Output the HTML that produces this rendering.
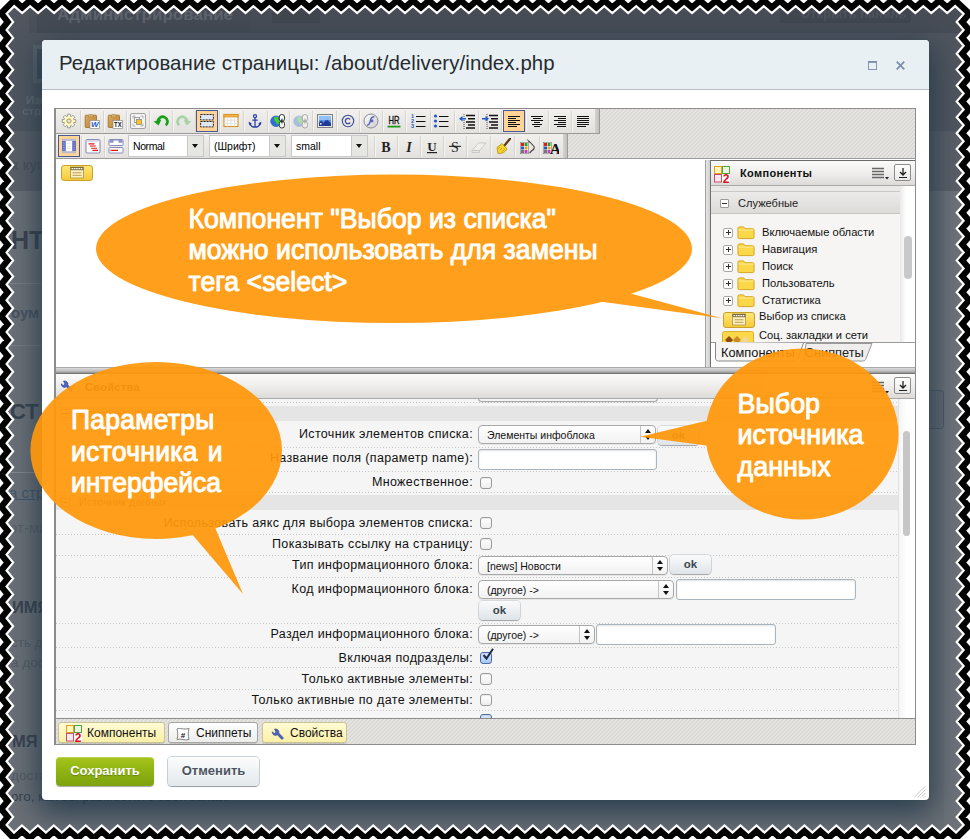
<!DOCTYPE html>
<html><head><meta charset="utf-8">
<style>
*{box-sizing:border-box;margin:0;padding:0}
html,body{width:970px;height:839px;overflow:hidden;background:#fff;font-family:"Liberation Sans",sans-serif;}
#stage{position:relative;width:970px;height:839px;overflow:hidden;background:#fff}
#stage svg.z{position:absolute;left:0;top:0}
#content{position:absolute;left:0;top:0;width:970px;height:839px;overflow:hidden;background:#6c7077;clip-path:polygon(6.6px 13.7px,14.2px 6.1px,22.2px 13.0px,30.1px 6.1px,38.1px 13.0px,46.1px 6.1px,54.1px 13.0px,62.0px 6.1px,70.0px 13.0px,78.0px 6.1px,86.0px 13.0px,93.9px 6.1px,101.9px 13.0px,109.9px 6.1px,117.9px 13.0px,125.8px 6.1px,133.8px 13.0px,141.8px 6.1px,149.8px 13.0px,157.7px 6.1px,165.7px 13.0px,173.7px 6.1px,181.7px 13.0px,189.6px 6.1px,197.6px 13.0px,205.6px 6.1px,213.6px 13.0px,221.5px 6.1px,229.5px 13.0px,237.5px 6.1px,245.5px 13.0px,253.4px 6.1px,261.4px 13.0px,269.4px 6.1px,277.4px 13.0px,285.3px 6.1px,293.3px 13.0px,301.3px 6.1px,309.3px 13.0px,317.2px 6.1px,325.2px 13.0px,333.2px 6.1px,341.2px 13.0px,349.1px 6.1px,357.1px 13.0px,365.1px 6.1px,373.1px 13.0px,381.0px 6.1px,389.0px 13.0px,397.0px 6.1px,405.0px 13.0px,412.9px 6.1px,420.9px 13.0px,428.9px 6.1px,436.9px 13.0px,444.8px 6.1px,452.8px 13.0px,460.8px 6.1px,468.8px 13.0px,476.7px 6.1px,484.7px 13.0px,492.7px 6.1px,500.6px 13.0px,508.6px 6.1px,516.6px 13.0px,524.6px 6.1px,532.5px 13.0px,540.5px 6.1px,548.5px 13.0px,556.5px 6.1px,564.4px 13.0px,572.4px 6.1px,580.4px 13.0px,588.4px 6.1px,596.3px 13.0px,604.3px 6.1px,612.3px 13.0px,620.3px 6.1px,628.2px 13.0px,636.2px 6.1px,644.2px 13.0px,652.2px 6.1px,660.1px 13.0px,668.1px 6.1px,676.1px 13.0px,684.1px 6.1px,692.0px 13.0px,700.0px 6.1px,708.0px 13.0px,716.0px 6.1px,723.9px 13.0px,731.9px 6.1px,739.9px 13.0px,747.9px 6.1px,755.8px 13.0px,763.8px 6.1px,771.8px 13.0px,779.8px 6.1px,787.7px 13.0px,795.7px 6.1px,803.7px 13.0px,811.7px 6.1px,819.6px 13.0px,827.6px 6.1px,835.6px 13.0px,843.6px 6.1px,851.5px 13.0px,859.5px 6.1px,867.5px 13.0px,875.5px 6.1px,883.4px 13.0px,891.4px 6.1px,899.4px 13.0px,907.4px 6.1px,915.3px 13.0px,923.3px 6.1px,931.3px 13.0px,939.3px 6.1px,947.2px 13.0px,955.2px 6.1px,963.6px 13.9px,956.7px 21.9px,963.6px 29.9px,956.7px 37.8px,963.6px 45.8px,956.7px 53.7px,963.6px 61.7px,956.7px 69.6px,963.6px 77.6px,956.7px 85.5px,963.6px 93.5px,956.7px 101.4px,963.6px 109.4px,956.7px 117.3px,963.6px 125.3px,956.7px 133.2px,963.6px 141.2px,956.7px 149.1px,963.6px 157.1px,956.7px 165.0px,963.6px 173.0px,956.7px 180.9px,963.6px 188.9px,956.7px 196.8px,963.6px 204.8px,956.7px 212.7px,963.6px 220.7px,956.7px 228.6px,963.6px 236.6px,956.7px 244.5px,963.6px 252.5px,956.7px 260.4px,963.6px 268.4px,956.7px 276.3px,963.6px 284.3px,956.7px 292.2px,963.6px 300.2px,956.7px 308.1px,963.6px 316.1px,956.7px 324.0px,963.6px 332.0px,956.7px 339.9px,963.6px 347.9px,956.7px 355.8px,963.6px 363.8px,956.7px 371.7px,963.6px 379.7px,956.7px 387.6px,963.6px 395.6px,956.7px 403.5px,963.6px 411.5px,956.7px 419.4px,963.6px 427.4px,956.7px 435.4px,963.6px 443.3px,956.7px 451.3px,963.6px 459.2px,956.7px 467.2px,963.6px 475.1px,956.7px 483.1px,963.6px 491.0px,956.7px 499.0px,963.6px 506.9px,956.7px 514.9px,963.6px 522.8px,956.7px 530.8px,963.6px 538.7px,956.7px 546.7px,963.6px 554.6px,956.7px 562.6px,963.6px 570.5px,956.7px 578.5px,963.6px 586.4px,956.7px 594.4px,963.6px 602.3px,956.7px 610.3px,963.6px 618.2px,956.7px 626.2px,963.6px 634.1px,956.7px 642.1px,963.6px 650.0px,956.7px 658.0px,963.6px 665.9px,956.7px 673.9px,963.6px 681.8px,956.7px 689.8px,963.6px 697.7px,956.7px 705.7px,963.6px 713.6px,956.7px 721.6px,963.6px 729.5px,956.7px 737.5px,963.6px 745.4px,956.7px 753.4px,963.6px 761.3px,956.7px 769.3px,963.6px 777.2px,956.7px 785.2px,963.6px 793.1px,956.7px 801.1px,963.6px 809.0px,956.7px 817.0px,963.6px 825.0px,956.0px 832.6px,948.1px 825.4px,940.1px 832.6px,932.1px 825.4px,924.1px 832.6px,916.2px 825.4px,908.2px 832.6px,900.2px 825.4px,892.2px 832.6px,884.2px 825.4px,876.2px 832.6px,868.3px 825.4px,860.3px 832.6px,852.3px 825.4px,844.3px 832.6px,836.3px 825.4px,828.3px 832.6px,820.3px 825.4px,812.4px 832.6px,804.4px 825.4px,796.4px 832.6px,788.4px 825.4px,780.4px 832.6px,772.4px 825.4px,764.5px 832.6px,756.5px 825.4px,748.5px 832.6px,740.5px 825.4px,732.5px 832.6px,724.5px 825.4px,716.5px 832.6px,708.6px 825.4px,700.6px 832.6px,692.6px 825.4px,684.6px 832.6px,676.6px 825.4px,668.6px 832.6px,660.7px 825.4px,652.7px 832.6px,644.7px 825.4px,636.7px 832.6px,628.7px 825.4px,620.7px 832.6px,612.8px 825.4px,604.8px 832.6px,596.8px 825.4px,588.8px 832.6px,580.8px 825.4px,572.8px 832.6px,564.8px 825.4px,556.9px 832.6px,548.9px 825.4px,540.9px 832.6px,532.9px 825.4px,524.9px 832.6px,516.9px 825.4px,509.0px 832.6px,501.0px 825.4px,493.0px 832.6px,485.0px 825.4px,477.0px 832.6px,469.0px 825.4px,461.0px 832.6px,453.1px 825.4px,445.1px 832.6px,437.1px 825.4px,429.1px 832.6px,421.1px 825.4px,413.1px 832.6px,405.2px 825.4px,397.2px 832.6px,389.2px 825.4px,381.2px 832.6px,373.2px 825.4px,365.2px 832.6px,357.2px 825.4px,349.3px 832.6px,341.3px 825.4px,333.3px 832.6px,325.3px 825.4px,317.3px 832.6px,309.3px 825.4px,301.4px 832.6px,293.4px 825.4px,285.4px 832.6px,277.4px 825.4px,269.4px 832.6px,261.4px 825.4px,253.5px 832.6px,245.5px 825.4px,237.5px 832.6px,229.5px 825.4px,221.5px 832.6px,213.5px 825.4px,205.5px 832.6px,197.6px 825.4px,189.6px 832.6px,181.6px 825.4px,173.6px 832.6px,165.6px 825.4px,157.6px 832.6px,149.7px 825.4px,141.7px 832.6px,133.7px 825.4px,125.7px 832.6px,117.7px 825.4px,109.7px 832.6px,101.7px 825.4px,93.8px 832.6px,85.8px 825.4px,77.8px 832.6px,69.8px 825.4px,61.8px 832.6px,53.8px 825.4px,45.9px 832.6px,37.9px 825.4px,29.9px 832.6px,21.9px 825.4px,14.0px 832.6px,6.6px 824.9px,13.1px 817.0px,6.6px 809.0px,13.1px 801.1px,6.6px 793.1px,13.1px 785.2px,6.6px 777.2px,13.1px 769.3px,6.6px 761.3px,13.1px 753.4px,6.6px 745.4px,13.1px 737.5px,6.6px 729.5px,13.1px 721.6px,6.6px 713.6px,13.1px 705.7px,6.6px 697.7px,13.1px 689.8px,6.6px 681.8px,13.1px 673.9px,6.6px 665.9px,13.1px 658.0px,6.6px 650.0px,13.1px 642.1px,6.6px 634.1px,13.1px 626.2px,6.6px 618.2px,13.1px 610.3px,6.6px 602.3px,13.1px 594.4px,6.6px 586.4px,13.1px 578.5px,6.6px 570.5px,13.1px 562.6px,6.6px 554.6px,13.1px 546.7px,6.6px 538.7px,13.1px 530.8px,6.6px 522.8px,13.1px 514.9px,6.6px 506.9px,13.1px 499.0px,6.6px 491.0px,13.1px 483.1px,6.6px 475.1px,13.1px 467.2px,6.6px 459.2px,13.1px 451.3px,6.6px 443.3px,13.1px 435.4px,6.6px 427.4px,13.1px 419.5px,6.6px 411.6px,13.1px 403.6px,6.6px 395.7px,13.1px 387.7px,6.6px 379.8px,13.1px 371.8px,6.6px 363.9px,13.1px 355.9px,6.6px 348.0px,13.1px 340.0px,6.6px 332.1px,13.1px 324.1px,6.6px 316.2px,13.1px 308.2px,6.6px 300.3px,13.1px 292.3px,6.6px 284.4px,13.1px 276.4px,6.6px 268.5px,13.1px 260.5px,6.6px 252.6px,13.1px 244.6px,6.6px 236.7px,13.1px 228.7px,6.6px 220.8px,13.1px 212.8px,6.6px 204.9px,13.1px 196.9px,6.6px 189.0px,13.1px 181.0px,6.6px 173.1px,13.1px 165.1px,6.6px 157.2px,13.1px 149.2px,6.6px 141.3px,13.1px 133.3px,6.6px 125.4px,13.1px 117.4px,6.6px 109.5px,13.1px 101.5px,6.6px 93.6px,13.1px 85.6px,6.6px 77.7px,13.1px 69.7px,6.6px 61.8px,13.1px 53.8px,6.6px 45.9px,13.1px 37.9px,6.6px 30.0px,13.1px 22.0px)}
.abs{position:absolute}
i{font-style:normal}
#adm{left:0;top:0;width:970px;height:131px;background:#51565f}
#band{left:0;top:131px;width:970px;height:60px;background:#5b5f68}
.bgt{position:absolute;color:#4b525c;white-space:nowrap;font-size:15px}
.bgh{position:absolute;color:#39424e;font-weight:bold;font-size:25px;white-space:nowrap}
#dlg{left:42px;top:40px;width:887px;height:760px;background:#fff;border-radius:4px;box-shadow:0 9px 30px 5px rgba(30,54,70,.85)}
#ttl{left:0;top:0;width:887px;height:50px;background:#e9f0f3;border-bottom:1px solid #b9bfc2;border-radius:4px 4px 0 0}
#ttl span{position:absolute;left:17px;top:11.5px;font-size:20.4px;letter-spacing:.11px;color:#262b30;white-space:nowrap}
.hatch{background:repeating-linear-gradient(135deg,#e6e4e0 0,#e6e4e0 1.6px,#dbd9d5 1.6px,#dbd9d5 2.83px)}
#ed{left:12px;top:68px;width:862px;height:637px;border:1px solid #8c8c8c;border-left-width:2px;background:#fff}
#tbar{left:0;top:0;width:859px;height:50px;border-bottom:1px solid #9b9b9b}
.tg{position:absolute;height:25px;background:linear-gradient(#f1f0ed,#e2e1dd);border-right:1px solid #9b9b9b;border-bottom:1px solid #9b9b9b}
.tg:after{content:"";position:absolute;right:0;top:0;bottom:0;width:4px;background:linear-gradient(90deg,#d4d3cf,#c2c1bd)}
.sep{position:absolute;width:2px;height:21px;background:linear-gradient(90deg,#d6d5d1 50%,#f6f5f3 50%)}
.hl{width:22px;height:22px;background:#ffd497;border:1px solid #4d5892}
.tsel{height:22px;background:#fff;border:1px solid #c8c8c8;font-size:10.5px;color:#000}
.tsel span{position:absolute;left:4px;top:4px}
.tsel b{position:absolute;right:0;top:0;width:16px;height:20px;background:#e6e6e3;border-left:1px solid #c8c8c8}
.tsel b:after{content:"";position:absolute;left:4px;top:8px;border:3.5px solid transparent;border-top:4px solid #111;border-bottom:0}

#bsave{left:14px;top:717px;width:98px;height:29px;border-radius:4px;background:linear-gradient(#a6c51c,#8fb312 50%,#7da20d);box-shadow:0 1px 1px rgba(0,0,0,.35),inset 0 1px 0 rgba(255,255,255,.25);color:#fff;font-weight:bold;font-size:13px;text-align:center;line-height:28px;text-shadow:0 1px 1px rgba(0,0,0,.25)}
#bcanc{left:126px;top:717px;width:91px;height:29px;border-radius:4px;background:linear-gradient(#fcfdfd,#e2e8eb);box-shadow:0 1px 1px rgba(0,0,0,.25),0 0 0 1px rgba(190,200,206,.8);color:#4b5560;font-weight:bold;font-size:13px;text-align:center;line-height:28px;text-shadow:0 1px 0 #fff}
.bub{}

#vsep{width:6px;height:207px;background:linear-gradient(90deg,#a2a2a2 0,#a2a2a2 1px,#e4e4e4 1px,#cfcfcf 5px,#6f6f6f 5px)}
#rp{width:204px;height:207px;background:#fff}
.phdr{background:linear-gradient(#fbfbfa,#ecebe9 60%,#dcdbd8);border-bottom:1px solid #a9a9a7}
.phdr b{position:absolute;font-size:11px;letter-spacing:.33px;color:#111;white-space:nowrap}
.shdr{background:linear-gradient(#ecebe9,#dcdbd8);border-bottom:1px solid #c6c5c2}
.shdr span{position:absolute;font-size:11.1px;color:#222}
.pm{width:9px;height:9px;border:1px solid #9a9a9a;background:#fff;border-radius:1px}
.pm .h{position:absolute;left:1px;top:3px;width:5px;height:1px;background:#333}
.pm .v{position:absolute;left:3px;top:1px;width:1px;height:5px;background:#333}
.pm.pl{width:10px;height:10px;border-color:#a8a8a8;border-radius:2px}
.pm.pl .h{left:1.5px;top:3.5px}
.pm.pl .v{left:3.5px;top:1.5px}
.ti{font-size:11.2px;color:#111;white-space:nowrap}
.dlb{width:17px;height:17px;border:1px solid #8c8c8c;background:linear-gradient(#fff,#e9e9e7);border-radius:2px}
.dlb svg{position:absolute;left:0.5px;top:0.5px}
#pb{background:#f5f5f5;overflow:hidden;font-size:12.500px;color:#111}
#pb .dot{position:absolute;left:0;width:842px;height:1px;background:repeating-linear-gradient(90deg,#c9c9c9 0,#c9c9c9 1px,transparent 1px,transparent 3px)}
#pb .lab{position:absolute;right:425px;white-space:nowrap;letter-spacing:.36px}
#pb .cb{position:absolute;left:424px;width:12px;height:12px;border:1px solid #9a9a9a;border-radius:3px;background:linear-gradient(#fff,#eee);box-shadow:inset 0 1px 1px rgba(0,0,0,.08)}
#pb .cb.ch{border-color:#4a6aa8;background:linear-gradient(#dfeafc,#a9c6f2)}
.psel{position:absolute;height:19px;border:1px solid #a8a8a8;border-radius:4px;background:linear-gradient(#fff,#f2f2f2);font-size:10.500px;box-shadow:0 1px 0 rgba(0,0,0,.06)}
.psel span{position:absolute;left:8px;top:3px;white-space:nowrap}
.psel b{position:absolute;right:0;top:0;width:15px;height:17px;border-left:1px solid #c4c4c4}
.psel .u{position:absolute;left:4px;top:3px;border:3px solid transparent;border-bottom:4.500px solid #111;border-top:0}
.psel .d{position:absolute;left:4px;top:10px;border:3px solid transparent;border-top:4.500px solid #111;border-bottom:0}
.pinp{position:absolute;height:21px;border:1px solid #a9b4bd;border-radius:3px;background:#fff;box-shadow:inset 0 1px 2px rgba(0,0,0,.12)}
.okb{position:absolute;width:41px;height:19px;border-radius:4px;background:linear-gradient(#fafbfc,#dfe4e8);box-shadow:0 1px 1px rgba(0,0,0,.25),0 0 0 1px rgba(160,170,178,.35);font-size:11.500px;font-weight:bold;color:#3a4850;text-align:center;line-height:18px}
.ghdr{position:absolute;left:0;width:842px;height:15px;background:#e5e5e5}
.ghdr span{position:absolute;left:23px;top:1px;font-size:11px;color:#555}
.btab{position:absolute;top:3px;height:21px;border:1px solid #a6a6a6;border-radius:3px;background:linear-gradient(#fff,#ececea);box-shadow:0 1px 0 rgba(0,0,0,.12)}
.btab.y{background:linear-gradient(#fffbd4,#fbf0a8);border-color:#c9c295}
.btab span{position:absolute;top:3px;font-size:12px;color:#111;white-space:nowrap}
</style></head><body>
<div id="stage">
<svg class="z" width="970" height="839"><polygon points="6.6,13.7 14.2,6.1 22.2,13.0 30.1,6.1 38.1,13.0 46.1,6.1 54.1,13.0 62.0,6.1 70.0,13.0 78.0,6.1 86.0,13.0 93.9,6.1 101.9,13.0 109.9,6.1 117.9,13.0 125.8,6.1 133.8,13.0 141.8,6.1 149.8,13.0 157.7,6.1 165.7,13.0 173.7,6.1 181.7,13.0 189.6,6.1 197.6,13.0 205.6,6.1 213.6,13.0 221.5,6.1 229.5,13.0 237.5,6.1 245.5,13.0 253.4,6.1 261.4,13.0 269.4,6.1 277.4,13.0 285.3,6.1 293.3,13.0 301.3,6.1 309.3,13.0 317.2,6.1 325.2,13.0 333.2,6.1 341.2,13.0 349.1,6.1 357.1,13.0 365.1,6.1 373.1,13.0 381.0,6.1 389.0,13.0 397.0,6.1 405.0,13.0 412.9,6.1 420.9,13.0 428.9,6.1 436.9,13.0 444.8,6.1 452.8,13.0 460.8,6.1 468.8,13.0 476.7,6.1 484.7,13.0 492.7,6.1 500.6,13.0 508.6,6.1 516.6,13.0 524.6,6.1 532.5,13.0 540.5,6.1 548.5,13.0 556.5,6.1 564.4,13.0 572.4,6.1 580.4,13.0 588.4,6.1 596.3,13.0 604.3,6.1 612.3,13.0 620.3,6.1 628.2,13.0 636.2,6.1 644.2,13.0 652.2,6.1 660.1,13.0 668.1,6.1 676.1,13.0 684.1,6.1 692.0,13.0 700.0,6.1 708.0,13.0 716.0,6.1 723.9,13.0 731.9,6.1 739.9,13.0 747.9,6.1 755.8,13.0 763.8,6.1 771.8,13.0 779.8,6.1 787.7,13.0 795.7,6.1 803.7,13.0 811.7,6.1 819.6,13.0 827.6,6.1 835.6,13.0 843.6,6.1 851.5,13.0 859.5,6.1 867.5,13.0 875.5,6.1 883.4,13.0 891.4,6.1 899.4,13.0 907.4,6.1 915.3,13.0 923.3,6.1 931.3,13.0 939.3,6.1 947.2,13.0 955.2,6.1 963.6,13.9 956.7,21.9 963.6,29.9 956.7,37.8 963.6,45.8 956.7,53.7 963.6,61.7 956.7,69.6 963.6,77.6 956.7,85.5 963.6,93.5 956.7,101.4 963.6,109.4 956.7,117.3 963.6,125.3 956.7,133.2 963.6,141.2 956.7,149.1 963.6,157.1 956.7,165.0 963.6,173.0 956.7,180.9 963.6,188.9 956.7,196.8 963.6,204.8 956.7,212.7 963.6,220.7 956.7,228.6 963.6,236.6 956.7,244.5 963.6,252.5 956.7,260.4 963.6,268.4 956.7,276.3 963.6,284.3 956.7,292.2 963.6,300.2 956.7,308.1 963.6,316.1 956.7,324.0 963.6,332.0 956.7,339.9 963.6,347.9 956.7,355.8 963.6,363.8 956.7,371.7 963.6,379.7 956.7,387.6 963.6,395.6 956.7,403.5 963.6,411.5 956.7,419.4 963.6,427.4 956.7,435.4 963.6,443.3 956.7,451.3 963.6,459.2 956.7,467.2 963.6,475.1 956.7,483.1 963.6,491.0 956.7,499.0 963.6,506.9 956.7,514.9 963.6,522.8 956.7,530.8 963.6,538.7 956.7,546.7 963.6,554.6 956.7,562.6 963.6,570.5 956.7,578.5 963.6,586.4 956.7,594.4 963.6,602.3 956.7,610.3 963.6,618.2 956.7,626.2 963.6,634.1 956.7,642.1 963.6,650.0 956.7,658.0 963.6,665.9 956.7,673.9 963.6,681.8 956.7,689.8 963.6,697.7 956.7,705.7 963.6,713.6 956.7,721.6 963.6,729.5 956.7,737.5 963.6,745.4 956.7,753.4 963.6,761.3 956.7,769.3 963.6,777.2 956.7,785.2 963.6,793.1 956.7,801.1 963.6,809.0 956.7,817.0 963.6,825.0 956.0,832.6 948.1,825.4 940.1,832.6 932.1,825.4 924.1,832.6 916.2,825.4 908.2,832.6 900.2,825.4 892.2,832.6 884.2,825.4 876.2,832.6 868.3,825.4 860.3,832.6 852.3,825.4 844.3,832.6 836.3,825.4 828.3,832.6 820.3,825.4 812.4,832.6 804.4,825.4 796.4,832.6 788.4,825.4 780.4,832.6 772.4,825.4 764.5,832.6 756.5,825.4 748.5,832.6 740.5,825.4 732.5,832.6 724.5,825.4 716.5,832.6 708.6,825.4 700.6,832.6 692.6,825.4 684.6,832.6 676.6,825.4 668.6,832.6 660.7,825.4 652.7,832.6 644.7,825.4 636.7,832.6 628.7,825.4 620.7,832.6 612.8,825.4 604.8,832.6 596.8,825.4 588.8,832.6 580.8,825.4 572.8,832.6 564.8,825.4 556.9,832.6 548.9,825.4 540.9,832.6 532.9,825.4 524.9,832.6 516.9,825.4 509.0,832.6 501.0,825.4 493.0,832.6 485.0,825.4 477.0,832.6 469.0,825.4 461.0,832.6 453.1,825.4 445.1,832.6 437.1,825.4 429.1,832.6 421.1,825.4 413.1,832.6 405.2,825.4 397.2,832.6 389.2,825.4 381.2,832.6 373.2,825.4 365.2,832.6 357.2,825.4 349.3,832.6 341.3,825.4 333.3,832.6 325.3,825.4 317.3,832.6 309.3,825.4 301.4,832.6 293.4,825.4 285.4,832.6 277.4,825.4 269.4,832.6 261.4,825.4 253.5,832.6 245.5,825.4 237.5,832.6 229.5,825.4 221.5,832.6 213.5,825.4 205.5,832.6 197.6,825.4 189.6,832.6 181.6,825.4 173.6,832.6 165.6,825.4 157.6,832.6 149.7,825.4 141.7,832.6 133.7,825.4 125.7,832.6 117.7,825.4 109.7,832.6 101.7,825.4 93.8,832.6 85.8,825.4 77.8,832.6 69.8,825.4 61.8,832.6 53.8,825.4 45.9,832.6 37.9,825.4 29.9,832.6 21.9,825.4 14.0,832.6 6.6,824.9 13.1,817.0 6.6,809.0 13.1,801.1 6.6,793.1 13.1,785.2 6.6,777.2 13.1,769.3 6.6,761.3 13.1,753.4 6.6,745.4 13.1,737.5 6.6,729.5 13.1,721.6 6.6,713.6 13.1,705.7 6.6,697.7 13.1,689.8 6.6,681.8 13.1,673.9 6.6,665.9 13.1,658.0 6.6,650.0 13.1,642.1 6.6,634.1 13.1,626.2 6.6,618.2 13.1,610.3 6.6,602.3 13.1,594.4 6.6,586.4 13.1,578.5 6.6,570.5 13.1,562.6 6.6,554.6 13.1,546.7 6.6,538.7 13.1,530.8 6.6,522.8 13.1,514.9 6.6,506.9 13.1,499.0 6.6,491.0 13.1,483.1 6.6,475.1 13.1,467.2 6.6,459.2 13.1,451.3 6.6,443.3 13.1,435.4 6.6,427.4 13.1,419.5 6.6,411.6 13.1,403.6 6.6,395.7 13.1,387.7 6.6,379.8 13.1,371.8 6.6,363.9 13.1,355.9 6.6,348.0 13.1,340.0 6.6,332.1 13.1,324.1 6.6,316.2 13.1,308.2 6.6,300.3 13.1,292.3 6.6,284.4 13.1,276.4 6.6,268.5 13.1,260.5 6.6,252.6 13.1,244.6 6.6,236.7 13.1,228.7 6.6,220.8 13.1,212.8 6.6,204.9 13.1,196.9 6.6,189.0 13.1,181.0 6.6,173.1 13.1,165.1 6.6,157.2 13.1,149.2 6.6,141.3 13.1,133.3 6.6,125.4 13.1,117.4 6.6,109.5 13.1,101.5 6.6,93.6 13.1,85.6 6.6,77.7 13.1,69.7 6.6,61.8 13.1,53.8 6.6,45.9 13.1,37.9 6.6,30.0 13.1,22.0" fill="#000" stroke="#000" stroke-width="14.6" stroke-linejoin="miter"/></svg>
<div id="content">
  <div class="abs" id="adm"></div>
  <div class="abs" id="band"></div>
  
<div class="abs" style="left:29px;top:0;width:950px;height:33px;background:#484d56"></div>
<div class="abs" style="left:29px;top:0;width:8px;height:33px;background:#4c515a"></div>
<div class="abs" style="left:37px;top:0;width:214px;height:33px;background:#464b54"></div>
<div class="abs" style="left:272px;top:0;width:48px;height:23px;background:#42474f;border-radius:3px"></div>
<div class="abs" style="left:780px;top:0;width:131px;height:23px;background:#42474f;border-radius:3px"></div>
<div class="bgt" style="left:57px;top:5px;font-size:17px;font-weight:bold;color:#5f646d">Администрирование</div>
<div class="bgt" style="left:800px;top:6px;font-size:13px;font-weight:bold;color:#4e535c">Открыть панель</div>
<div class="abs" style="left:33px;top:45px;width:40px;height:38px;border:4px solid #5d646d;background:#454e59"></div>
<div class="bgt" style="left:26px;top:94px;font-size:11.500px;font-weight:bold;color:#676c75">Изм</div>
<div class="bgt" style="left:22px;top:105px;font-size:11.500px;font-weight:bold;color:#676c75">стр</div>
<div class="abs" style="left:944px;top:191px;width:30px;height:660px;background:#6f737a"></div>
<div class="abs" style="left:0;top:283px;width:60px;height:1px;background:#7b7f86"></div>
<div class="abs" style="left:0;top:345px;width:60px;height:1px;background:#7b7f86"></div>
<div class="bgt" style="left:12px;top:156px;color:#484e57">к куп</div>
<div class="bgh" style="left:11px;top:226px;font-size:25px">НТ</div>
<div class="bgt" style="left:11px;top:304px;font-weight:bold;color:#4a5260">оум</div>
<div class="bgh" style="left:10px;top:399px;font-size:22px">СТ</div>
<div class="abs" style="left:0;top:472px;width:60px;height:1px;background:#858990"></div>
<div class="bgt" style="left:9px;top:484px;text-decoration:underline;color:#41586c">а стра</div>
<div class="bgt" style="left:9px;top:519px;color:#596069">от-ма</div>
<div class="bgh" style="left:12px;top:598px;font-size:16.5px">ИМЯ</div>
<div class="bgt" style="left:11px;top:635px;font-size:13.5px;color:#565c65">сть д</div>
<div class="bgt" style="left:11px;top:655px;font-size:13.5px;color:#565c65">а дост</div>
<div class="bgh" style="left:12px;top:732px;font-size:16.5px">МЯ</div>
<div class="bgt" style="left:11px;top:768px;font-size:13.5px;color:#565c65">доста</div>
<div class="bgt" style="left:11px;top:789px;font-size:13.5px;color:#36424f">ого, как вы разместите свой заказ.</div>
<div class="abs" style="left:890px;top:390px;width:54px;height:39px;border:1px solid rgba(48,68,88,.45);border-radius:4px;background:rgba(60,80,100,.10)"></div>

  <div class="abs" id="dlg"><div class="abs" style="left:0;top:0;width:887px;height:760px">
    <div class="abs" id="ttl"><span>Редактирование страницы: /about/delivery/index.php</span></div>
    <div class="abs" id="ed">
      <div class="abs hatch" id="tbar">
        <div class="tg" style="left:0;top:0;width:544px"></div>
        <div class="tg" style="left:0;top:25px;width:512px"></div>
        <i class="sep" style="left:24px;top:2px"></i><i class="sep" style="left:47px;top:2px"></i><i class="sep" style="left:70px;top:2px"></i><i class="sep" style="left:93px;top:2px"></i><i class="sep" style="left:116px;top:2px"></i><i class="sep" style="left:139px;top:2px"></i><i class="sep" style="left:163px;top:2px"></i><i class="sep" style="left:187px;top:2px"></i><i class="sep" style="left:211px;top:2px"></i><i class="sep" style="left:233px;top:2px"></i><i class="sep" style="left:256px;top:2px"></i><i class="sep" style="left:280px;top:2px"></i><i class="sep" style="left:303px;top:2px"></i><i class="sep" style="left:326px;top:2px"></i><i class="sep" style="left:349px;top:2px"></i><i class="sep" style="left:374px;top:2px"></i><i class="sep" style="left:398px;top:2px"></i><i class="sep" style="left:422px;top:2px"></i><i class="sep" style="left:445px;top:2px"></i><i class="sep" style="left:469px;top:2px"></i><i class="sep" style="left:492px;top:2px"></i><i class="sep" style="left:515px;top:2px"></i><i class="sep" style="left:25px;top:27px"></i><i class="sep" style="left:48px;top:27px"></i><i class="sep" style="left:318px;top:27px"></i><i class="sep" style="left:341px;top:27px"></i><i class="sep" style="left:364px;top:27px"></i><i class="sep" style="left:387px;top:27px"></i><i class="sep" style="left:410px;top:27px"></i><i class="sep" style="left:434px;top:27px"></i><i class="sep" style="left:458px;top:27px"></i><i class="sep" style="left:483px;top:27px"></i>
        <svg class="abs" style="left:5.0px;top:4.0px" width="16" height="16" viewBox="0 0 16 16"><polygon points="6.5,3.2 6.6,1.2 9.4,1.2 9.5,3.2 10.3,3.5 11.8,2.2 13.8,4.2 12.5,5.7 12.8,6.5 14.8,6.6 14.8,9.4 12.8,9.5 12.5,10.3 13.8,11.8 11.8,13.8 10.3,12.5 9.5,12.8 9.4,14.8 6.6,14.8 6.5,12.8 5.7,12.5 4.2,13.8 2.2,11.8 3.5,10.3 3.2,9.5 1.2,9.4 1.2,6.6 3.2,6.5 3.5,5.7 2.2,4.2 4.2,2.2 5.7,3.5" fill="#fbf7c6" stroke="#9a9a9a" stroke-width="1" stroke-linejoin="round"/><circle cx="8" cy="8" r="2.1" fill="#e4e6ee" stroke="#b3953c" stroke-width="1"/></svg><svg class="abs" style="left:27.5px;top:4.0px" width="16" height="16" viewBox="0 0 16 16"><defs><linearGradient id="cb" x1="0" y1="0" x2="1" y2="1"><stop offset="0" stop-color="#d9ab62"/><stop offset="1" stop-color="#b98236"/></linearGradient></defs><rect x="1.200" y="2.200" width="11.300" height="12.300" rx=".9" fill="url(#cb)" stroke="#a3742c" stroke-width=".9"/><path d="M4.300 3.800L5.300 1.600h3.100l1 2.200z" fill="#ecd3a0" stroke="#a3742c" stroke-width=".6"/><path d="M6.100 2.900l.75-.9.750.9z" fill="#a3742c"/><rect x="6" y="7.5" width="9.5" height="8" fill="#fff" stroke="#8a8a8a" stroke-width=".7"/><text x="10.7" y="14.4" font-size="8" font-weight="bold" font-style="italic" fill="#2358c9" text-anchor="middle" font-family="Liberation Sans">W</text></svg><svg class="abs" style="left:50.5px;top:4.0px" width="16" height="16" viewBox="0 0 16 16"><defs><linearGradient id="cb" x1="0" y1="0" x2="1" y2="1"><stop offset="0" stop-color="#d9ab62"/><stop offset="1" stop-color="#b98236"/></linearGradient></defs><rect x="1.200" y="2.200" width="11.300" height="12.300" rx=".9" fill="url(#cb)" stroke="#a3742c" stroke-width=".9"/><path d="M4.300 3.800L5.300 1.600h3.100l1 2.200z" fill="#ecd3a0" stroke="#a3742c" stroke-width=".6"/><path d="M6.100 2.900l.75-.9.750.9z" fill="#a3742c"/><rect x="6" y="7.5" width="9.5" height="8" fill="#fff" stroke="#8a8a8a" stroke-width=".7"/><text x="10.8" y="14.3" font-size="7" font-weight="bold" fill="#111" text-anchor="middle" font-family="Liberation Sans" textLength="7.5" lengthAdjust="spacingAndGlyphs">TX</text></svg><svg class="abs" style="left:73.5px;top:4.0px" width="16" height="16" viewBox="0 0 16 16"><rect x=".5" y=".5" width="15" height="15" rx="1.5" fill="#f4f4f2" stroke="#9a9a9a" stroke-width=".9"/><path d="M3 5.5V3h2.5M10.5 3H13v2.5M13 10.5V13h-2.5M5.5 13H3v-2.5" fill="none" stroke="#aaa" stroke-width=".9"/><rect x="4.5" y="4.5" width="5" height="5" fill="#f4f4f2" stroke="#8d8d8d" stroke-width=".8"/><rect x="6.5" y="6.5" width="5" height="5" fill="#ffc21a" stroke="#8d8d8d" stroke-width=".8"/></svg><svg class="abs" style="left:97.0px;top:4.0px" width="16" height="16" viewBox="0 0 16 16"><path d="M12.8 12.2A4.8 4.8 0 1 0 4.9 8.6" fill="none" stroke="#16a016" stroke-width="2.7"/><path d="M.6 8.4L8.4 6.6 5.6 12.6z" fill="#16a016"/></svg><svg class="abs" style="left:120.0px;top:4.0px" width="16" height="16" viewBox="0 0 16 16"><g opacity=".3" transform="translate(16 0) scale(-1 1)"><path d="M12.8 12.2A4.8 4.8 0 1 0 4.9 8.6" fill="none" stroke="#16a016" stroke-width="2.7"/><path d="M.6 8.4L8.4 6.6 5.6 12.6z" fill="#16a016"/></g></svg><div class="abs hl" style="left:140px;top:1px"></div><svg class="abs" style="left:143.0px;top:4.0px" width="16" height="16" viewBox="0 0 16 16"><rect x="1.6" y="1.5" width="12.8" height="5.4" fill="#dfe6f5" stroke="#222" stroke-width="1" stroke-dasharray="2 1"/><rect x="1.600" y="8.500" width="12.800" height="5.400" fill="#dfe6f5" stroke="#222" stroke-width="1" stroke-dasharray="2 1"/></svg><svg class="abs" style="left:167.0px;top:4.0px" width="16" height="16" viewBox="0 0 16 16"><rect x="1" y="1.500" width="14" height="12" fill="#fff" stroke="#d8901c" stroke-width="1.100"/><rect x="1" y="1.500" width="14" height="2.500" fill="#f4b44c" stroke="#d8901c" stroke-width=".8"/><path d="M4.500 4v9.500M8 4v9.500M11.500 4v9.500M1 7.200h14M1 10.300h14" stroke="#dcdcdc" stroke-width=".8" fill="none"/></svg><svg class="abs" style="left:191.0px;top:4.0px" width="16" height="16" viewBox="0 0 16 16"><g fill="none" stroke="#2c3ea6" stroke-width="1.250"><circle cx="8" cy="3.200" r="1.500"/><path d="M8 4.700V14.300M5.300 7.200h5.400M2.800 10.200c.8 2.600 2.700 4 5.200 4s4.400-1.400 5.200-4"/></g><path d="M1.600 8.800L4.800 10.200 2.200 12.200zM14.400 8.800L11.200 10.200 13.800 12.200z" fill="#2c3ea6"/></svg><svg class="abs" style="left:214.0px;top:4.0px" width="16" height="16" viewBox="0 0 16 16"><circle cx="6" cy="8.200" r="5.300" fill="#2f6fd6" stroke="#2456b0" stroke-width=".6"/><path d="M4.200 4.300c1.800-.8 3.600-.3 4.600.9l-1.200.9 1.900 1.700c.8.200 1.500.200 2 .500l-1.800.800-1.200 2.200-1.600.200-.600-2.300-1.800-1.300z" fill="#3fcf2f"/><g fill="#fff" stroke="#333" stroke-width="1"><rect x="9.300" y="1.500" width="5.200" height="6.800" rx="2.500"/><rect x="9.300" y="8.200" width="5.200" height="6.800" rx="2.500"/></g><path d="M11.900 5v6.500" stroke="#222" stroke-width="1.300"/><path d="M11.900 4.200v2M11.900 10v2" stroke="#fff" stroke-width="1.300"/></svg><svg class="abs" style="left:237.0px;top:4.0px" width="16" height="16" viewBox="0 0 16 16"><g opacity=".35"><circle cx="6" cy="8.200" r="5.300" fill="#2f6fd6" stroke="#2456b0" stroke-width=".6"/><path d="M4.200 4.300c1.800-.8 3.600-.3 4.600.9l-1.200.9 1.900 1.700c.8.200 1.500.200 2 .500l-1.800.800-1.200 2.200-1.600.200-.600-2.300-1.800-1.300z" fill="#3fcf2f"/><g fill="#fff" stroke="#333" stroke-width="1"><rect x="9.300" y="1.500" width="5.200" height="6.800" rx="2.500"/><rect x="9.300" y="8.200" width="5.200" height="6.800" rx="2.500"/></g><path d="M11.900 5v6.500" stroke="#222" stroke-width="1.300"/><path d="M11.900 4.200v2M11.900 10v2" stroke="#fff" stroke-width="1.300"/></g></svg><svg class="abs" style="left:260.5px;top:4.0px" width="16" height="16" viewBox="0 0 16 16"><rect x=".5" y="1.500" width="15" height="13" fill="#e9e9e9" stroke="#808080" stroke-width="1"/><rect x="2" y="3" width="12" height="10" fill="#5b9bea"/><rect x="2" y="3" width="12" height="4" fill="#8fc0f6"/><path d="M2 13V9.500l2.500-2 2 2.500 3-4.500 4.500 5V13z" fill="#23399a"/><path d="M8.500 7.200l1-1.500 1.200 1.300-1 .3z" fill="#dfe8ff"/><circle cx="3.800" cy="10.800" r=".9" fill="#fff"/></svg><svg class="abs" style="left:284.0px;top:4.0px" width="16" height="16" viewBox="0 0 16 16"><circle cx="8" cy="8" r="5.700" fill="none" stroke="#3a4796" stroke-width="1.100"/><path d="M10.200 6.400A2.700 2.700 0 1 0 10.200 9.600" fill="none" stroke="#3a4796" stroke-width="1.200"/></svg><svg class="abs" style="left:307.0px;top:4.0px" width="16" height="16" viewBox="0 0 16 16"><defs><linearGradient id="fg" x1="0" y1="0" x2="1" y2="1"><stop offset="0" stop-color="#fff"/><stop offset="1" stop-color="#c9cad2"/></linearGradient></defs><circle cx="8" cy="8" r="7" fill="url(#fg)" stroke="#8b8b90" stroke-width="1"/><path d="M11.300 3.800c-2.600 0-3.400 1.400-3.900 3.500h2.200v1.300H7.100C6.500 10.800 5.800 12 4 12.400" fill="none" stroke="#5a66b4" stroke-width="1.400"/></svg><svg class="abs" style="left:329.5px;top:4.0px" width="16" height="16" viewBox="0 0 16 16"><text x="8" y="10.500" font-size="11" fill="#111" stroke="#111" stroke-width=".35" text-anchor="middle" font-family="Liberation Sans" textLength="11" lengthAdjust="spacingAndGlyphs">HR</text><rect x="1.500" y="12.700" width="13" height="1.800" fill="#1e9a1e"/></svg><svg class="abs" style="left:354.0px;top:4.0px" width="16" height="16" viewBox="0 0 16 16"><path d="M6 3.500h9.500M6 8.500h9.500M6 13.500h9.500" stroke="#111" stroke-width="1.100"/><g font-size="5.500" font-weight="bold" fill="#2358c9" font-family="Liberation Sans"><text x="1" y="5">1</text><text x="1" y="10">2</text><text x="1" y="15">3</text></g></svg><svg class="abs" style="left:377.0px;top:4.0px" width="16" height="16" viewBox="0 0 16 16"><path d="M6 3.500h9.500M6 8.500h9.500M6 13.500h9.500" stroke="#111" stroke-width="1.100"/><g fill="#2358c9"><circle cx="2.500" cy="3" r="1.600"/><circle cx="2.500" cy="8" r="1.600"/><circle cx="2.500" cy="13" r="1.600"/></g></svg><svg class="abs" style="left:403.0px;top:4.0px" width="16" height="16" viewBox="0 0 16 16"><path d="M7 2.500h9M9 5.700h7M7 8.900h9M9 12.100h7M7 15h9" stroke="#111" stroke-width="1.500"/><path d="M5 1v15" stroke="#222" stroke-width=".8" stroke-dasharray="1 1"/><path d="M0 5.700l3.500-2.700v1.900H7v1.600H3.500v1.900z" fill="#2358c9"/></svg><svg class="abs" style="left:426.0px;top:4.0px" width="16" height="16" viewBox="0 0 16 16"><path d="M7 2.500h9M9 5.700h7M7 8.900h9M9 12.100h7M7 15h9" stroke="#111" stroke-width="1.500"/><path d="M5 1v15" stroke="#222" stroke-width=".8" stroke-dasharray="1 1"/><path d="M7 5.700L3.500 3v1.900H0v1.600h3.500v1.900z" fill="#2358c9"/></svg><div class="abs hl" style="left:447px;top:1px"></div><svg class="abs" style="left:450.0px;top:4.0px" width="16" height="16" viewBox="0 0 16 16"><rect x="2.0" y="3.0" width="12.0" height="1" fill="#111"/><rect x="2.0" y="5.0" width="8.0" height="1" fill="#111"/><rect x="2.0" y="7.0" width="12.0" height="1" fill="#111"/><rect x="2.0" y="9.0" width="8.0" height="1" fill="#111"/><rect x="2.0" y="11.0" width="12.0" height="1" fill="#111"/><rect x="2.0" y="13.0" width="9.0" height="1" fill="#111"/></svg><svg class="abs" style="left:473.0px;top:4.0px" width="16" height="16" viewBox="0 0 16 16"><rect x="2.0" y="3.0" width="12.0" height="1" fill="#111"/><rect x="4.0" y="5.0" width="8.0" height="1" fill="#111"/><rect x="2.0" y="7.0" width="12.0" height="1" fill="#111"/><rect x="5.0" y="9.0" width="6.0" height="1" fill="#111"/><rect x="3.0" y="11.0" width="10.0" height="1" fill="#111"/><rect x="5.0" y="13.0" width="6.0" height="1" fill="#111"/></svg><svg class="abs" style="left:496.0px;top:4.0px" width="16" height="16" viewBox="0 0 16 16"><rect x="2.0" y="3.0" width="12.0" height="1" fill="#111"/><rect x="6.0" y="5.0" width="8.0" height="1" fill="#111"/><rect x="2.0" y="7.0" width="12.0" height="1" fill="#111"/><rect x="6.0" y="9.0" width="8.0" height="1" fill="#111"/><rect x="2.0" y="11.0" width="12.0" height="1" fill="#111"/><rect x="5.0" y="13.0" width="9.0" height="1" fill="#111"/></svg><svg class="abs" style="left:519.0px;top:4.0px" width="16" height="16" viewBox="0 0 16 16"><rect x="2.0" y="3.0" width="12.0" height="1" fill="#111"/><rect x="2.0" y="5.0" width="12.0" height="1" fill="#111"/><rect x="2.0" y="7.0" width="12.0" height="1" fill="#111"/><rect x="2.0" y="9.0" width="12.0" height="1" fill="#111"/><rect x="2.0" y="11.0" width="12.0" height="1" fill="#111"/><rect x="2.0" y="13.0" width="9.0" height="1" fill="#111"/></svg><div class="abs hl" style="left:2px;top:26px"></div><svg class="abs" style="left:5.0px;top:29.0px" width="16" height="16" viewBox="0 0 16 16"><rect x="1" y="1" width="14" height="14" fill="#fff"/><rect x="1" y="2.500" width="3.800" height="11" fill="#6770c2"/><rect x="11.200" y="2.500" width="3.800" height="11" fill="#6770c2"/><rect x="1" y=".8" width="14" height="2" fill="#b9bad0"/><rect x="1" y="13.200" width="14" height="2" fill="#b9bad0"/><path d="M2.900 4.500v8" stroke="#8fd0ff" stroke-width="1" stroke-dasharray="1 1.300"/><path d="M13.100 4.500v8" stroke="#9aa2e0" stroke-width="1" stroke-dasharray="1 1.300"/><path d="M6 5.500h4M6 8h4M6 10.500h4" stroke="#e4e4ec" stroke-width=".8"/></svg><svg class="abs" style="left:29.0px;top:29.0px" width="16" height="16" viewBox="0 0 16 16"><rect x="1" y="1.500" width="14" height="13.500" rx="1.500" fill="#fff" stroke="#8d8bbc" stroke-width="1.100"/><rect x="1.600" y="2" width="12.800" height="2" fill="#d9d9ea"/><path d="M3.500 5.800h6M4.800 8h6M6.200 10.200h6M7.500 12.400h5.500" stroke="#d61c18" stroke-width="1.150"/></svg><svg class="abs" style="left:52.0px;top:29.0px" width="16" height="16" viewBox="0 0 16 16"><rect x="1" y="1.500" width="14" height="6" rx=".8" fill="#fff" stroke="#8d8bbc" stroke-width="1"/><rect x="1.500" y="2" width="13" height="2.800" fill="#8f95cc"/><rect x="5.500" y="2.600" width="5" height="3.600" fill="#fff"/><rect x="1" y="9.500" width="14" height="5.500" rx=".8" fill="#fff" stroke="#8d8bbc" stroke-width="1"/><path d="M3.500 12.300h6.500" stroke="#d61c18" stroke-width="1.200"/><circle cx="3" cy="12.300" r=".7" fill="#d61c18"/></svg><svg class="abs" style="left:322.0px;top:29.0px" width="16" height="16" viewBox="0 0 16 16"><text x="8" y="13.500" font-size="14" font-weight="bold" fill="#222" text-anchor="middle" font-family="Liberation Serif">B</text></svg><svg class="abs" style="left:345.0px;top:29.0px" width="16" height="16" viewBox="0 0 16 16"><text x="8" y="13.500" font-size="14" font-weight="bold" font-style="italic" fill="#222" text-anchor="middle" font-family="Liberation Serif">I</text></svg><svg class="abs" style="left:367.5px;top:29.0px" width="16" height="16" viewBox="0 0 16 16"><text x="8" y="12.500" font-size="13" font-weight="bold" fill="#222" text-anchor="middle" font-family="Liberation Serif">U</text><rect x="3" y="14" width="10" height="1.200" fill="#222"/></svg><svg class="abs" style="left:390.5px;top:29.0px" width="16" height="16" viewBox="0 0 16 16"><text x="8" y="13.500" font-size="14" fill="#222" text-anchor="middle" font-family="Liberation Serif">S</text><rect x="2" y="7.800" width="12" height="1.100" fill="#222"/></svg><svg class="abs" style="left:415.0px;top:29.0px" width="16" height="16" viewBox="0 0 16 16"><g opacity=".45"><path d="M1 12.500L7.500 5h7.500L8.500 12.500z" fill="#f7f7f7" stroke="#999" stroke-width=".9"/><path d="M1 12.500h7.500v2H1z" fill="#e6e6e6" stroke="#999" stroke-width=".8"/></g></svg><svg class="abs" style="left:438.5px;top:29.0px" width="16" height="16" viewBox="0 0 16 16"><path d="M9.500 7.500L15 .8" stroke="#5b3a17" stroke-width="2.200" stroke-linecap="round"/><path d="M2 9.500l5-4 5 5.500c-2 3-5 5-9 4.500z" fill="#f6d22c" stroke="#b08d12" stroke-width=".8"/><path d="M5 12l2-2M7.500 13.500l2-2.200M3.500 10.500l1.500-1.500" stroke="#b08d12" stroke-width=".7"/></svg><svg class="abs" style="left:463.5px;top:29.0px" width="16" height="16" viewBox="0 0 16 16"><rect x=".3" y="4.300" width="8" height="11.400" fill="#fff" stroke="#777" stroke-width=".6"/><g><rect x="1" y="5" width="3" height="3" fill="#d8201c"/><rect x="4.500" y="5" width="3" height="3" fill="#2aa32a"/><rect x="1" y="8.500" width="3" height="3" fill="#2358c9"/><rect x="4.500" y="8.500" width="3" height="3" fill="#e8a020"/><rect x="1" y="12" width="3" height="3" fill="#777"/><rect x="4.500" y="12" width="3" height="3" fill="#c040c0"/></g><path d="M9 3l5 5.500c.8 1.500-.5 3.500-2 4L9.500 15" fill="none" stroke="#444" stroke-width="1.100"/><path d="M7.500 1.500l2 3" stroke="#444" stroke-width="1"/></svg><svg class="abs" style="left:487.0px;top:29.0px" width="16" height="16" viewBox="0 0 16 16"><rect x=".3" y="4.300" width="8" height="11.400" fill="#fff" stroke="#777" stroke-width=".6"/><g><rect x="1" y="5" width="3" height="3" fill="#d8201c"/><rect x="4.500" y="5" width="3" height="3" fill="#2aa32a"/><rect x="1" y="8.500" width="3" height="3" fill="#2358c9"/><rect x="4.500" y="8.500" width="3" height="3" fill="#e8a020"/><rect x="1" y="12" width="3" height="3" fill="#777"/><rect x="4.500" y="12" width="3" height="3" fill="#c040c0"/></g><text x="12.300" y="15.500" font-size="15" font-weight="bold" fill="#111" text-anchor="middle" font-family="Liberation Serif">A</text></svg><div class="abs tsel" style="left:72px;top:26px;width:76px"><span><i style="letter-spacing:-.4px">Normal</i></span><b></b></div><div class="abs tsel" style="left:153px;top:26px;width:77px"><span>(Шрифт)</span><b></b></div><div class="abs tsel" style="left:235px;top:26px;width:77px"><span>small</span><b></b></div>
      </div>
      <svg class="abs" style="left:5.0px;top:56.0px" width="32" height="16" viewBox="0 0 32 16"><defs><linearGradient id="cg" x1="0" y1="0" x2="0" y2="1"><stop offset="0" stop-color="#fee778"/><stop offset="1" stop-color="#f6c93a"/></linearGradient></defs><rect x=".5" y=".5" width="31" height="15" rx="2.500" fill="url(#cg)" stroke="#c9a227"/><rect x="9.500" y="2" width="13" height="11" fill="#fff3c4" stroke="#b09040" stroke-width=".8"/><rect x="9.500" y="2" width="13" height="3.200" fill="#7c6c44"/><path d="M11.500 7.800h9M11.500 10.300h9" stroke="#b09040" stroke-width=".9"/><path d="M10.500 3.600h11" stroke="#fff" stroke-width="1.200" stroke-dasharray="1.600 .7"/></svg><div class="abs" id="vsep" style="left:649px;top:51px"></div><div class="abs" id="rp" style="left:655px;top:51px"><div class="abs" style="left:0;top:0;width:204px;height:1px;background:#6a6a6a"></div><div class="abs phdr" style="left:0;top:1px;width:204px;height:25px"><b style="left:29px;top:6px">Компоненты</b><svg class="abs" style="left:3px;top:5px" width="16" height="17" viewBox="0 0 16 17"><rect x=".5" y=".5" width="7" height="7" fill="#fff6c0" stroke="#e0a020"/><rect x="8.500" y=".5" width="7" height="7" fill="#e8f6e0" stroke="#58a040"/><rect x=".5" y="8.500" width="7" height="7.500" fill="#fce8ee" stroke="#c05070"/><rect x="8" y="8" width="8" height="9" fill="#fff"/><text x="12" y="16.800" font-size="12" font-weight="bold" fill="#e0101c" text-anchor="middle" font-family="Liberation Sans">2</text></svg><svg class="abs" style="left:161px;top:6px" width="17" height="13" viewBox="0 0 17 13"><path d="M0 1.500h12M0 4.500h12M0 7.500h12M0 10.500h12" stroke="#666" stroke-width="1.300"/><path d="M13 10h4l-2 2.500z" fill="#222"/></svg><div class="abs dlb" style="left:183px;top:3px"><svg width="14" height="14" viewBox="0 0 14 14"><path d="M7 2v6M4 6l3 3 3-3" fill="none" stroke="#222" stroke-width="1.300"/><path d="M3 11.500h8" stroke="#222" stroke-width="1.200"/></svg></div></div><div class="abs" style="left:0;top:26px;width:189px;height:156px;background:#f6f5f3;overflow:hidden"><div class="abs" style="left:0;top:0;width:189px;height:6px;background:#eae9e7;border-bottom:1px solid #c8c7c4"></div><div class="abs" style="left:9px;top:1px;width:9px;height:1px;background:#d2d1ce"></div><div class="abs shdr" style="left:0;top:6px;width:189px;height:22px"><div class="abs pm" style="left:9px;top:7px"><i class="h"></i></div><span style="left:27px;top:5px">Служебные</span></div><div class="abs pm pl" style="left:12.3px;top:41.6px"><i class="h"></i><i class="v"></i></div><svg class="abs" style="left:26.0px;top:40.1px" width="18" height="13.5" viewBox="0 0 19 15" preserveAspectRatio="none"><path d="M1 2.500c0-1 .5-1.500 1.500-1.500h4.500l1.500 2h8c1 0 1.500.500 1.500 1.500v8c0 1-.5 1.500-1.500 1.500h-14c-1 0-1.500-.500-1.500-1.500z" fill="#fbd84a" stroke="#d2a218" stroke-width="1"/><path d="M1.500 4.500h16" stroke="#fdeb9a" stroke-width="1"/></svg><span class="abs ti" style="left:51px;top:40.2px">Включаемые области</span><div class="abs pm pl" style="left:12.3px;top:58.6px"><i class="h"></i><i class="v"></i></div><svg class="abs" style="left:26.0px;top:57.1px" width="18" height="13.5" viewBox="0 0 19 15" preserveAspectRatio="none"><path d="M1 2.500c0-1 .5-1.500 1.500-1.500h4.500l1.500 2h8c1 0 1.500.500 1.500 1.500v8c0 1-.5 1.500-1.500 1.500h-14c-1 0-1.500-.500-1.500-1.500z" fill="#fbd84a" stroke="#d2a218" stroke-width="1"/><path d="M1.500 4.500h16" stroke="#fdeb9a" stroke-width="1"/></svg><span class="abs ti" style="left:51px;top:57.2px">Навигация</span><div class="abs pm pl" style="left:12.3px;top:75.6px"><i class="h"></i><i class="v"></i></div><svg class="abs" style="left:26.0px;top:74.1px" width="18" height="13.5" viewBox="0 0 19 15" preserveAspectRatio="none"><path d="M1 2.500c0-1 .5-1.500 1.500-1.500h4.500l1.500 2h8c1 0 1.500.500 1.500 1.500v8c0 1-.5 1.500-1.500 1.500h-14c-1 0-1.500-.500-1.500-1.500z" fill="#fbd84a" stroke="#d2a218" stroke-width="1"/><path d="M1.500 4.500h16" stroke="#fdeb9a" stroke-width="1"/></svg><span class="abs ti" style="left:51px;top:74.2px">Поиск</span><div class="abs pm pl" style="left:12.3px;top:92.6px"><i class="h"></i><i class="v"></i></div><svg class="abs" style="left:26.0px;top:91.1px" width="18" height="13.5" viewBox="0 0 19 15" preserveAspectRatio="none"><path d="M1 2.500c0-1 .5-1.500 1.500-1.500h4.500l1.500 2h8c1 0 1.500.500 1.500 1.500v8c0 1-.5 1.500-1.500 1.500h-14c-1 0-1.500-.500-1.500-1.500z" fill="#fbd84a" stroke="#d2a218" stroke-width="1"/><path d="M1.500 4.500h16" stroke="#fdeb9a" stroke-width="1"/></svg><span class="abs ti" style="left:51px;top:91.2px">Пользователь</span><div class="abs pm pl" style="left:12.3px;top:109.6px"><i class="h"></i><i class="v"></i></div><svg class="abs" style="left:26.0px;top:108.1px" width="18" height="13.5" viewBox="0 0 19 15" preserveAspectRatio="none"><path d="M1 2.500c0-1 .5-1.500 1.500-1.500h4.500l1.500 2h8c1 0 1.500.500 1.500 1.500v8c0 1-.5 1.500-1.500 1.500h-14c-1 0-1.500-.500-1.500-1.500z" fill="#fbd84a" stroke="#d2a218" stroke-width="1"/><path d="M1.500 4.500h16" stroke="#fdeb9a" stroke-width="1"/></svg><span class="abs ti" style="left:51px;top:108.2px">Статистика</span><svg class="abs" style="left:11.5px;top:125.5px" width="32" height="16" viewBox="0 0 32 16"><defs><linearGradient id="cg" x1="0" y1="0" x2="0" y2="1"><stop offset="0" stop-color="#fee778"/><stop offset="1" stop-color="#f6c93a"/></linearGradient></defs><rect x=".5" y=".5" width="31" height="15" rx="2.500" fill="url(#cg)" stroke="#c9a227"/><rect x="9.500" y="2" width="13" height="11" fill="#fff3c4" stroke="#b09040" stroke-width=".8"/><rect x="9.500" y="2" width="13" height="3.200" fill="#7c6c44"/><path d="M11.500 7.800h9M11.500 10.300h9" stroke="#b09040" stroke-width=".9"/><path d="M10.500 3.600h11" stroke="#fff" stroke-width="1.200" stroke-dasharray="1.600 .7"/></svg><span class="abs ti" style="left:48px;top:124px">Выбор из списка</span><svg class="abs" style="left:11px;top:145px" width="32" height="16" viewBox="0 0 32 16"><rect x=".5" y=".5" width="31" height="15" rx="2" fill="#fbd84a" stroke="#d9b02c"/><path d="M3 9l4-4 4 4-4 4z" fill="#8a4a10"/><path d="M11 9l4-4 4 4-4 4z" fill="#c98a28"/><path d="M19 9l4-4 4 4-4 4z" fill="#f0d890"/></svg><span class="abs ti" style="left:48px;top:143px">Соц. закладки и сети</span></div><div class="abs" style="left:189px;top:26px;width:15px;height:156px;background:linear-gradient(90deg,#e9e9e9,#fff 40%)"></div><div class="abs" style="left:193px;top:76px;width:8px;height:43px;border-radius:4px;background:#c9c9c9"></div><div class="abs" style="left:0;top:182px;width:204px;height:25px;background:#fff;border-top:1px solid #9a9a9a"></div><svg class="abs" style="left:0;top:182px" width="205" height="25" viewBox="0 0 205 25"><path d="M4.500 0v16c0 2 1 3 3 3h76c2 0 3-1 3.500-2.500L92.500 1" fill="#f6f5f3" stroke="#888" stroke-width="1"/><path d="M95 1.500h66l-6 15c-.6 1.700-1.500 2.500-3.500 2.500H89.500c2 0 3-.8 3.600-2.500z" fill="#efeeec" stroke="#999" stroke-width="1"/><text x="10" y="15" font-size="12.8" fill="#111" font-family="Liberation Sans">Компоненты</text><text x="93.7" y="15" font-size="12.8" fill="#222" font-family="Liberation Sans">Сниппеты</text></svg></div><div class="abs" style="left:0;top:258px;width:859px;height:7px;background:linear-gradient(#dcdcdc,#b9b9b9 55%,#8e8e8e 85%,#555);border-top:1px solid #aaa"></div><div class="abs phdr" style="left:0;top:265px;width:859px;height:25px"><svg class="abs" style="left:4px;top:6px" width="13" height="13" viewBox="0 0 13 13"><path d="M3.500 1.200A3.200 3.200 0 0 1 7.800 5l4.200 4.500c.8.900-.7 2.400-1.600 1.500L6.300 6.700A3.200 3.200 0 0 1 1.200 3.800L3.300 5.500 5 4 3.500 1.200z" fill="#4a66c0" stroke="#2d3f8c" stroke-width=".6"/></svg><b style="left:29px;top:7px;color:#333">Свойства</b><svg class="abs" style="left:816px;top:7px" width="17" height="13" viewBox="0 0 17 13"><path d="M0 1.500h12M0 4.500h12M0 7.500h12M0 10.500h12" stroke="#666" stroke-width="1.300"/><path d="M13 10h4l-2 2.500z" fill="#222"/></svg><div class="abs dlb" style="left:838px;top:3px"><svg width="14" height="14" viewBox="0 0 14 14"><path d="M7 2v6M4 6l3 3 3-3" fill="none" stroke="#222" stroke-width="1.300"/><path d="M3 11.500h8" stroke="#222" stroke-width="1.200"/></svg></div></div><div class="abs" id="pb" style="left:0;top:290px;width:842px;height:319px"><i class="dot" style="top:3px"></i><div class="psel" style="left:422px;top:-7px;width:180px;height:10px;border-top:0;border-radius:0 0 4px 4px"></div><div class="ghdr" style="top:7px"><div class="abs pm" style="left:5px;top:3px"><i class="h"></i></div><span>Основные параметры</span></div><span class="lab" style="top:28px">Источник элементов списка:</span><div class="psel" style="left:422px;top:26px;width:178px"><span>Элементы инфоблока</span><b><i class="u"></i><i class="d"></i></b></div><div class="okb" style="left:602px;top:27px">ok</div><i class="dot" style="top:48px"></i><span class="lab" style="top:52px">Название поля (параметр name):</span><div class="pinp" style="left:422px;top:50px;width:179px"></div><i class="dot" style="top:72px"></i><span class="lab" style="top:76px">Множественное:</span><i class="cb" style="top:78px"></i><i class="dot" style="top:93px"></i><div class="ghdr" style="top:96px"><div class="abs pm" style="left:5px;top:3px"><i class="h"></i></div><span>Источник данных</span></div><span class="lab" style="top:117px">Использовать аякс для выбора элементов списка:</span><i class="cb" style="top:118px"></i><i class="dot" style="top:135px"></i><span class="lab" style="top:138px">Показывать ссылку на страницу:</span><i class="cb" style="top:139px"></i><i class="dot" style="top:156px"></i><span class="lab" style="top:159px">Тип информационного блока:</span><div class="psel" style="left:422px;top:157px;width:190px"><span>[news] Новости</span><b><i class="u"></i><i class="d"></i></b></div><div class="okb" style="left:614px;top:156px">ok</div><i class="dot" style="top:178px"></i><span class="lab" style="top:183px">Код информационного блока:</span><div class="psel" style="left:422px;top:181px;width:196px"><span>(другое) -&gt;</span><b><i class="u"></i><i class="d"></i></b></div><div class="pinp" style="left:620px;top:180px;width:180px"></div><div class="okb" style="left:423px;top:202px">ok</div><i class="dot" style="top:224px"></i><span class="lab" style="top:228px">Раздел информационного блока:</span><div class="psel" style="left:422px;top:226px;width:117px"><span>(другое) -&gt;</span><b><i class="u"></i><i class="d"></i></b></div><div class="pinp" style="left:540px;top:225px;width:180px"></div><i class="dot" style="top:248px"></i><span class="lab" style="top:252px">Включая подразделы:</span><i class="cb ch" style="top:253px"></i><svg class="abs" style="left:425px;top:249px" width="14" height="14" viewBox="0 0 14 14"><path d="M2.500 7l3 3.500L12 .8" fill="none" stroke="#1a2a4a" stroke-width="2"/></svg><i class="dot" style="top:268px"></i><span class="lab" style="top:273px">Только активные элементы:</span><i class="cb" style="top:274px"></i><i class="dot" style="top:290px"></i><span class="lab" style="top:294px">Только активные по дате элементы:</span><i class="cb" style="top:295px"></i><i class="dot" style="top:311px"></i><i class="cb ch" style="top:315px"></i></div><div class="abs" style="left:842px;top:290px;width:17px;height:319px;background:linear-gradient(90deg,#e2e2e2 0,#e2e2e2 1px,#f4f4f4 1px,#fff 50%)"></div><div class="abs" style="left:846.5px;top:322px;width:7.5px;height:105px;border-radius:4px;background:#c6c6c6"></div><div class="abs hatch" style="left:0;top:609px;width:859px;height:26px;border-top:1px solid #8c8c8c"><div class="btab y" style="left:2px;width:107px"><svg class="abs" style="left:7px;top:2px" width="16" height="17" viewBox="0 0 16 17"><rect x=".5" y=".5" width="7" height="7" fill="#fff6c0" stroke="#e0a020"/><rect x="8.500" y=".5" width="7" height="7" fill="#e8f6e0" stroke="#58a040"/><rect x=".5" y="8.500" width="7" height="7.500" fill="#fce8ee" stroke="#c05070"/><rect x="8" y="8" width="8" height="9" fill="#fff"/><text x="12" y="16.800" font-size="12" font-weight="bold" fill="#e0101c" text-anchor="middle" font-family="Liberation Sans">2</text></svg><span style="left:28px">Компоненты</span></div><div class="btab" style="left:112px;width:90px"><svg class="abs" style="left:6px;top:4px" width="16" height="15" viewBox="0 0 16 15"><path d="M2 2c3-1.500 6 1 12-.5c-1 4-1 7 0 11c-4 1.500-8-1.500-12 0c1-3.500 1-7 0-10.500z" fill="#fff" stroke="#777" stroke-width=".9"/><text x="8" y="11" font-size="8" font-weight="bold" fill="#111" text-anchor="middle" font-family="Liberation Sans">#</text></svg><span style="left:27px">Сниппеты</span></div><div class="btab y" style="left:206px;width:85px"><svg class="abs" style="left:8px;top:5px" width="13" height="13" viewBox="0 0 13 13"><path d="M3.500 1.200A3.200 3.200 0 0 1 7.800 5l4.200 4.500c.8.900-.7 2.400-1.600 1.500L6.300 6.700A3.200 3.200 0 0 1 1.200 3.800L3.300 5.500 5 4 3.500 1.200z" fill="#4a66c0" stroke="#2d3f8c" stroke-width=".6"/></svg><span style="left:27px">Свойства</span></div></div>
    </div>
    
<svg class="abs" style="left:826px;top:21px" width="9" height="9" viewBox="0 0 10 10"><rect x=".5" y="1" width="9" height="8.500" fill="none" stroke="#7d8eab" stroke-width="1"/><rect x="0" y="0" width="10" height="2" fill="#7d8eab"/></svg>
<svg class="abs" style="left:854px;top:21px" width="9" height="9" viewBox="0 0 10 10"><path d="M.8.800l8.400 8.400M9.200.800L.8 9.200" stroke="#7d8eab" stroke-width="2"/></svg>
<div class="abs" id="bsave">Сохранить</div>
<div class="abs" id="bcanc">Отменить</div>
<svg class="abs" style="left:872px;top:746px" width="12" height="12" viewBox="0 0 12 12"><path d="M0 11.500L11.500 0M3.500 11.500l8-8M7 11.500L11.500 7M10 11.500l1.500-1.500" stroke="#bbb" stroke-width=".8"/></svg>

  </div></div>
  <svg class="abs bub" style="left:80px;top:160px" width="660" height="190" viewBox="80 160 660 190"><g opacity=".93" fill="#ff980b"><ellipse cx="394.0" cy="248.8" rx="298.0" ry="74.3"/><polygon points="600,285.3 722,318.3 560,296.1"/></g><g fill="#fff" stroke="#fff" stroke-width=".95" stroke-linejoin="round" font-size="26.65" font-family="Liberation Sans"><text transform="translate(188.5 227.5) scale(1 1.045)">Компонент "Выбор из списка"</text><text transform="translate(188.5 259.4) scale(1 1.045)">можно использовать для замены</text><text transform="translate(188.5 291.3) scale(1 1.045)">тега &lt;select&gt;</text></g></svg><svg class="abs bub" style="left:20px;top:350px" width="280" height="260" viewBox="20 350 280 260"><g opacity=".93" fill="#ff980b"><ellipse cx="156.2" cy="450.5" rx="125.8" ry="88.5"/><polygon points="208,511 243,594 179,519"/></g><g fill="#fff" stroke="#fff" stroke-width=".95" stroke-linejoin="round" font-size="26.50" font-family="Liberation Sans"><text transform="translate(71.0 429.3) scale(1 1.045)" letter-spacing=".25">Параметры</text><text transform="translate(71.0 460.7) scale(1 1.045)" letter-spacing=".3" word-spacing="2.3">источника и</text><text transform="translate(71.0 492.1) scale(1 1.045)">интерфейса</text></g></svg><svg class="abs bub" style="left:630px;top:340px" width="280" height="200" viewBox="630 340 280 200"><g opacity=".93" fill="#ff980b"><ellipse cx="802.0" cy="434.1" rx="96.5" ry="85.5"/><polygon points="741,412.5 640,436.7 738,449.7"/></g><g fill="#fff" stroke="#fff" stroke-width=".95" stroke-linejoin="round" font-size="26.90" font-family="Liberation Sans"><text transform="translate(737.5 412.8) scale(1 1.045)">Выбор</text><text transform="translate(737.5 444.3) scale(1 1.045)">источника</text><text transform="translate(737.5 475.8) scale(1 1.045)">данных</text></g></svg>
</div>
<svg class="z" width="970" height="839"><polygon points="6.6,13.7 14.2,6.1 22.2,13.0 30.1,6.1 38.1,13.0 46.1,6.1 54.1,13.0 62.0,6.1 70.0,13.0 78.0,6.1 86.0,13.0 93.9,6.1 101.9,13.0 109.9,6.1 117.9,13.0 125.8,6.1 133.8,13.0 141.8,6.1 149.8,13.0 157.7,6.1 165.7,13.0 173.7,6.1 181.7,13.0 189.6,6.1 197.6,13.0 205.6,6.1 213.6,13.0 221.5,6.1 229.5,13.0 237.5,6.1 245.5,13.0 253.4,6.1 261.4,13.0 269.4,6.1 277.4,13.0 285.3,6.1 293.3,13.0 301.3,6.1 309.3,13.0 317.2,6.1 325.2,13.0 333.2,6.1 341.2,13.0 349.1,6.1 357.1,13.0 365.1,6.1 373.1,13.0 381.0,6.1 389.0,13.0 397.0,6.1 405.0,13.0 412.9,6.1 420.9,13.0 428.9,6.1 436.9,13.0 444.8,6.1 452.8,13.0 460.8,6.1 468.8,13.0 476.7,6.1 484.7,13.0 492.7,6.1 500.6,13.0 508.6,6.1 516.6,13.0 524.6,6.1 532.5,13.0 540.5,6.1 548.5,13.0 556.5,6.1 564.4,13.0 572.4,6.1 580.4,13.0 588.4,6.1 596.3,13.0 604.3,6.1 612.3,13.0 620.3,6.1 628.2,13.0 636.2,6.1 644.2,13.0 652.2,6.1 660.1,13.0 668.1,6.1 676.1,13.0 684.1,6.1 692.0,13.0 700.0,6.1 708.0,13.0 716.0,6.1 723.9,13.0 731.9,6.1 739.9,13.0 747.9,6.1 755.8,13.0 763.8,6.1 771.8,13.0 779.8,6.1 787.7,13.0 795.7,6.1 803.7,13.0 811.7,6.1 819.6,13.0 827.6,6.1 835.6,13.0 843.6,6.1 851.5,13.0 859.5,6.1 867.5,13.0 875.5,6.1 883.4,13.0 891.4,6.1 899.4,13.0 907.4,6.1 915.3,13.0 923.3,6.1 931.3,13.0 939.3,6.1 947.2,13.0 955.2,6.1 963.6,13.9 956.7,21.9 963.6,29.9 956.7,37.8 963.6,45.8 956.7,53.7 963.6,61.7 956.7,69.6 963.6,77.6 956.7,85.5 963.6,93.5 956.7,101.4 963.6,109.4 956.7,117.3 963.6,125.3 956.7,133.2 963.6,141.2 956.7,149.1 963.6,157.1 956.7,165.0 963.6,173.0 956.7,180.9 963.6,188.9 956.7,196.8 963.6,204.8 956.7,212.7 963.6,220.7 956.7,228.6 963.6,236.6 956.7,244.5 963.6,252.5 956.7,260.4 963.6,268.4 956.7,276.3 963.6,284.3 956.7,292.2 963.6,300.2 956.7,308.1 963.6,316.1 956.7,324.0 963.6,332.0 956.7,339.9 963.6,347.9 956.7,355.8 963.6,363.8 956.7,371.7 963.6,379.7 956.7,387.6 963.6,395.6 956.7,403.5 963.6,411.5 956.7,419.4 963.6,427.4 956.7,435.4 963.6,443.3 956.7,451.3 963.6,459.2 956.7,467.2 963.6,475.1 956.7,483.1 963.6,491.0 956.7,499.0 963.6,506.9 956.7,514.9 963.6,522.8 956.7,530.8 963.6,538.7 956.7,546.7 963.6,554.6 956.7,562.6 963.6,570.5 956.7,578.5 963.6,586.4 956.7,594.4 963.6,602.3 956.7,610.3 963.6,618.2 956.7,626.2 963.6,634.1 956.7,642.1 963.6,650.0 956.7,658.0 963.6,665.9 956.7,673.9 963.6,681.8 956.7,689.8 963.6,697.7 956.7,705.7 963.6,713.6 956.7,721.6 963.6,729.5 956.7,737.5 963.6,745.4 956.7,753.4 963.6,761.3 956.7,769.3 963.6,777.2 956.7,785.2 963.6,793.1 956.7,801.1 963.6,809.0 956.7,817.0 963.6,825.0 956.0,832.6 948.1,825.4 940.1,832.6 932.1,825.4 924.1,832.6 916.2,825.4 908.2,832.6 900.2,825.4 892.2,832.6 884.2,825.4 876.2,832.6 868.3,825.4 860.3,832.6 852.3,825.4 844.3,832.6 836.3,825.4 828.3,832.6 820.3,825.4 812.4,832.6 804.4,825.4 796.4,832.6 788.4,825.4 780.4,832.6 772.4,825.4 764.5,832.6 756.5,825.4 748.5,832.6 740.5,825.4 732.5,832.6 724.5,825.4 716.5,832.6 708.6,825.4 700.6,832.6 692.6,825.4 684.6,832.6 676.6,825.4 668.6,832.6 660.7,825.4 652.7,832.6 644.7,825.4 636.7,832.6 628.7,825.4 620.7,832.6 612.8,825.4 604.8,832.6 596.8,825.4 588.8,832.6 580.8,825.4 572.8,832.6 564.8,825.4 556.9,832.6 548.9,825.4 540.9,832.6 532.9,825.4 524.9,832.6 516.9,825.4 509.0,832.6 501.0,825.4 493.0,832.6 485.0,825.4 477.0,832.6 469.0,825.4 461.0,832.6 453.1,825.4 445.1,832.6 437.1,825.4 429.1,832.6 421.1,825.4 413.1,832.6 405.2,825.4 397.2,832.6 389.2,825.4 381.2,832.6 373.2,825.4 365.2,832.6 357.2,825.4 349.3,832.6 341.3,825.4 333.3,832.6 325.3,825.4 317.3,832.6 309.3,825.4 301.4,832.6 293.4,825.4 285.4,832.6 277.4,825.4 269.4,832.6 261.4,825.4 253.5,832.6 245.5,825.4 237.5,832.6 229.5,825.4 221.5,832.6 213.5,825.4 205.5,832.6 197.6,825.4 189.6,832.6 181.6,825.4 173.6,832.6 165.6,825.4 157.6,832.6 149.7,825.4 141.7,832.6 133.7,825.4 125.7,832.6 117.7,825.4 109.7,832.6 101.7,825.4 93.8,832.6 85.8,825.4 77.8,832.6 69.8,825.4 61.8,832.6 53.8,825.4 45.9,832.6 37.9,825.4 29.9,832.6 21.9,825.4 14.0,832.6 6.6,824.9 13.1,817.0 6.6,809.0 13.1,801.1 6.6,793.1 13.1,785.2 6.6,777.2 13.1,769.3 6.6,761.3 13.1,753.4 6.6,745.4 13.1,737.5 6.6,729.5 13.1,721.6 6.6,713.6 13.1,705.7 6.6,697.7 13.1,689.8 6.6,681.8 13.1,673.9 6.6,665.9 13.1,658.0 6.6,650.0 13.1,642.1 6.6,634.1 13.1,626.2 6.6,618.2 13.1,610.3 6.6,602.3 13.1,594.4 6.6,586.4 13.1,578.5 6.6,570.5 13.1,562.6 6.6,554.6 13.1,546.7 6.6,538.7 13.1,530.8 6.6,522.8 13.1,514.9 6.6,506.9 13.1,499.0 6.6,491.0 13.1,483.1 6.6,475.1 13.1,467.2 6.6,459.2 13.1,451.3 6.6,443.3 13.1,435.4 6.6,427.4 13.1,419.5 6.6,411.6 13.1,403.6 6.6,395.7 13.1,387.7 6.6,379.8 13.1,371.8 6.6,363.9 13.1,355.9 6.6,348.0 13.1,340.0 6.6,332.1 13.1,324.1 6.6,316.2 13.1,308.2 6.6,300.3 13.1,292.3 6.6,284.4 13.1,276.4 6.6,268.5 13.1,260.5 6.6,252.6 13.1,244.6 6.6,236.7 13.1,228.7 6.6,220.8 13.1,212.8 6.6,204.9 13.1,196.9 6.6,189.0 13.1,181.0 6.6,173.1 13.1,165.1 6.6,157.2 13.1,149.2 6.6,141.3 13.1,133.3 6.6,125.4 13.1,117.4 6.6,109.5 13.1,101.5 6.6,93.6 13.1,85.6 6.6,77.7 13.1,69.7 6.6,61.8 13.1,53.8 6.6,45.9 13.1,37.9 6.6,30.0 13.1,22.0" fill="none" stroke="#fff" stroke-width="2.2" stroke-linejoin="miter"/></svg>
</div>
</body></html>
